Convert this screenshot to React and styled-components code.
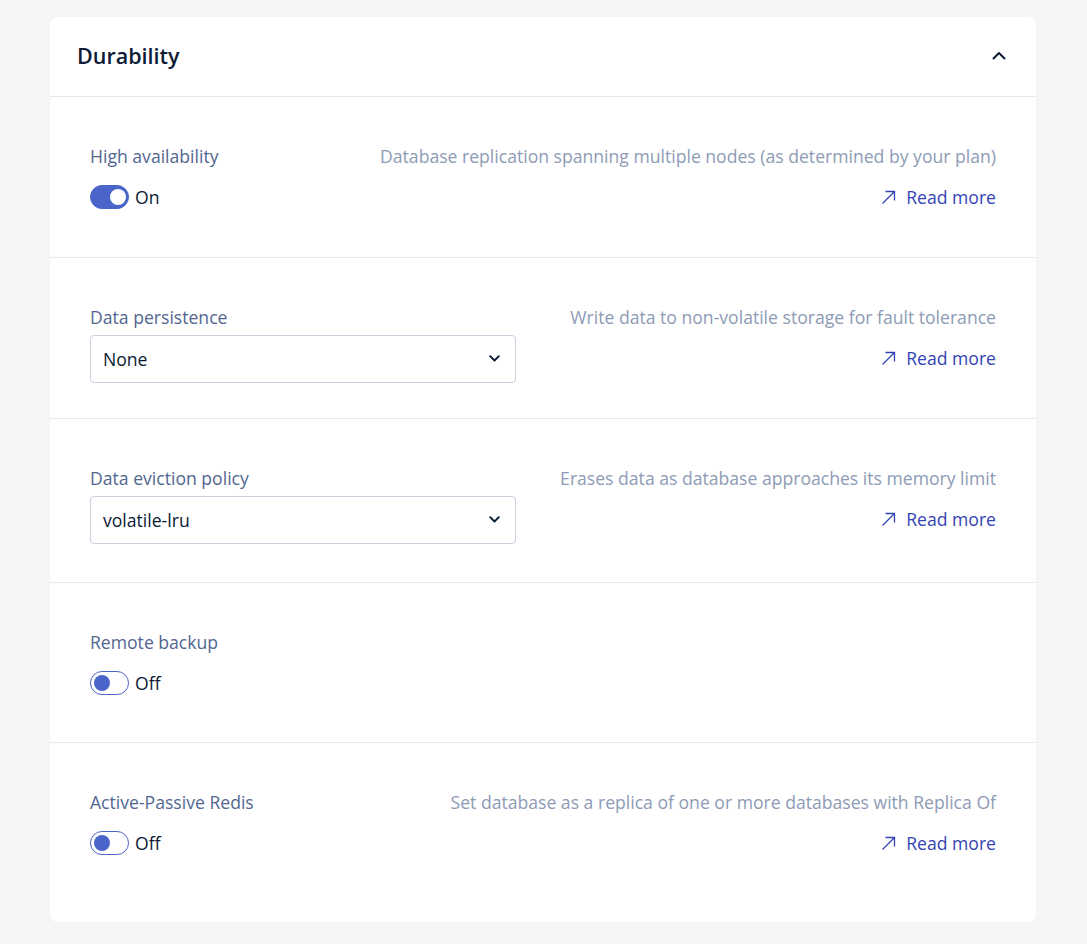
import React from "react";
import styled, { createGlobalStyle } from "styled-components";

const Global = createGlobalStyle`
  html, body {
    margin: 0;
    padding: 0;
    background: #f4f5f7;
    font-family: "Open Sans", "Noto Sans", sans-serif;
  }
`;

const Page = styled.div`
  padding: 17px 51px 23px 50px;
`;

const Card = styled.div`
  background: #ffffff;
  border-radius: 8px;
  overflow: hidden;
`;

const Header = styled.div`
  box-sizing: border-box;
  display: flex;
  align-items: center;
  justify-content: space-between;
  height: 80px;
  padding: 0 30px 3px 27px;
  border-bottom: 1px solid #e6e8ec;
`;

const Title = styled.h2`
  margin: 0;
  font-size: 21.5px;
  font-weight: 600;
  color: #0d1b36;
`;

const Section = styled.div`
  box-sizing: border-box;
  display: flex;
  justify-content: space-between;
  align-items: flex-start;
  height: ${(p) => p.h}px;
  padding: 47px 40px 0 40px;
  border-bottom: ${(p) => (p.last ? "none" : "1px solid #e6e8ec")};
`;

const Left = styled.div`
  display: flex;
  flex-direction: column;
`;

const Right = styled.div`
  display: flex;
  flex-direction: column;
  align-items: flex-end;
  gap: 17px;
`;

const Label = styled.div`
  font-size: 17.6px;
  line-height: 24px;
  color: #52668f;
`;

const Desc = styled.div`
  font-size: 17.6px;
  line-height: 24px;
  color: #8d9bb6;
`;

const ReadMore = styled.a`
  display: flex;
  align-items: center;
  gap: 10px;
  font-size: 17.6px;
  line-height: 24px;
  color: #3343b5;
  text-decoration: none;
  cursor: pointer;
`;

const ToggleRow = styled.div`
  display: flex;
  align-items: center;
  gap: 6px;
  height: 24px;
  margin-top: 17px;
  font-size: 17.6px;
  color: #0b1a33;
`;

const Track = styled.div`
  box-sizing: border-box;
  width: 39px;
  height: 24px;
  border-radius: 12px;
  border: 1.5px solid #4a65c9;
  background: ${(p) => (p.on ? "#4a65c9" : "#ffffff")};
  display: flex;
  align-items: center;
  justify-content: ${(p) => (p.on ? "flex-end" : "flex-start")};
  padding: 0 2.5px;
`;

const Knob = styled.div`
  width: 16px;
  height: 16px;
  border-radius: 50%;
  background: ${(p) => (p.on ? "#ffffff" : "#4a65c9")};
`;

const Select = styled.div`
  box-sizing: border-box;
  width: 426px;
  height: 48px;
  margin-top: 6px;
  border: 1px solid #c9d1de;
  border-radius: 4px;
  display: flex;
  align-items: center;
  justify-content: space-between;
  padding: 0 15px 1px 12px;
  font-size: 17.6px;
  color: #0b1a33;
`;

const ArrowIcon = () => (
  <svg width="15" height="15" viewBox="0 0 15 15" fill="none">
    <path d="M1.5 13.5L13.5 1.5M4.5 1.5H13.5V10.5" stroke="#3343b5" strokeWidth="1.3" />
  </svg>
);

const ChevronDown = () => (
  <svg width="11" height="7" viewBox="0 0 11 7" fill="none">
    <path d="M1.2 1.2L5.5 5.5L9.8 1.2" stroke="#0b1a33" strokeWidth="1.9" strokeLinecap="round" strokeLinejoin="round" />
  </svg>
);

const ChevronUp = () => (
  <svg width="14" height="9" viewBox="0 0 14 9" fill="none">
    <path d="M1.5 7.5L7 2L12.5 7.5" stroke="#0b1a33" strokeWidth="2" strokeLinecap="round" strokeLinejoin="round" />
  </svg>
);

const Toggle = ({ on }) => (
  <ToggleRow>
    <Track on={on}>
      <Knob on={on} />
    </Track>
    {on ? "On" : "Off"}
  </ToggleRow>
);

const rows = [
  {
    label: "High availability",
    toggle: true,
    on: true,
    h: 161,
    desc: "Database replication spanning multiple nodes (as determined by your plan)",
  },
  {
    label: "Data persistence",
    select: "None",
    h: 161,
    desc: "Write data to non-volatile storage for fault tolerance",
  },
  {
    label: "Data eviction policy",
    select: "volatile-lru",
    h: 164,
    desc: "Erases data as database approaches its memory limit",
  },
  { label: "Remote backup", toggle: true, on: false, h: 160 },
  {
    label: "Active-Passive Redis",
    toggle: true,
    on: false,
    h: 179,
    desc: "Set database as a replica of one or more databases with Replica Of",
  },
];

export default function App() {
  return (
    <>
      <Global />
      <Page>
        <Card>
          <Header>
            <Title>Durability</Title>
            <ChevronUp />
          </Header>
          {rows.map((r, i) => (
            <Section key={r.label} h={r.h} last={i === rows.length - 1}>
              <Left>
                <Label>{r.label}</Label>
                {r.toggle ? (
                  <Toggle on={r.on} />
                ) : (
                  <Select>
                    {r.select}
                    <ChevronDown />
                  </Select>
                )}
              </Left>
              {r.desc && (
                <Right>
                  <Desc>{r.desc}</Desc>
                  <ReadMore>
                    <ArrowIcon />
                    Read more
                  </ReadMore>
                </Right>
              )}
            </Section>
          ))}
        </Card>
      </Page>
    </>
  );
}
